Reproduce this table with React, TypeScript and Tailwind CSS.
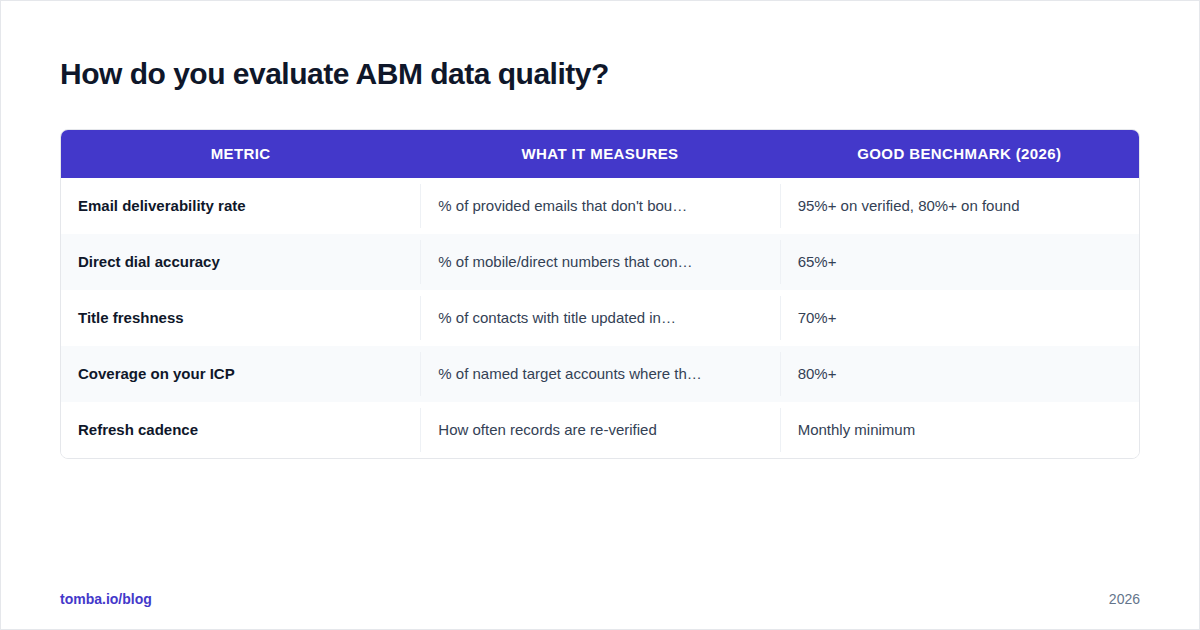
const ROWS = [
  { metric: 'Email deliverability rate', measures: "% of provided emails that don't bou…", benchmark: '95%+ on verified, 80%+ on found' },
  { metric: 'Direct dial accuracy', measures: '% of mobile/direct numbers that con…', benchmark: '65%+' },
  { metric: 'Title freshness', measures: '% of contacts with title updated in…', benchmark: '70%+' },
  { metric: 'Coverage on your ICP', measures: '% of named target accounts where th…', benchmark: '80%+' },
  { metric: 'Refresh cadence', measures: 'How often records are re-verified', benchmark: 'Monthly minimum' },
];

const HEADERS = ['Metric', 'What it measures', 'Good benchmark (2026)'];

export default function App() {
  return (
    <div
      className="w-[1200px] h-[630px] bg-white border border-gray-200 flex flex-col px-[59px] pt-[55px] pb-5"
      style={{ fontFamily: '"Liberation Sans", Arial, sans-serif' }}
    >
      <h1 className="text-[30px] leading-9 font-bold text-[#0f172a] tracking-[-0.5px]">
        How do you evaluate ABM data quality?
      </h1>

      <div className="mt-[37px] border border-gray-200 rounded-lg overflow-hidden">
        <div className="grid grid-cols-3 h-12 bg-[#4338ca]">
          {HEADERS.map((h) => (
            <div key={h} className="flex items-center justify-center pt-px text-[15px] font-bold uppercase tracking-[0.4px] text-white">
              {h}
            </div>
          ))}
        </div>

        {ROWS.map((row, i) => (
          <div
            key={row.metric}
            className={`grid grid-cols-3 h-14 py-1.5 ${i % 2 === 1 ? 'bg-[#f8fafc]' : 'bg-white'}`}
          >
            <div className="flex items-center pl-[17px] text-[15px] font-bold text-[#0f172a]">
              {row.metric}
            </div>
            <div className="flex items-center pl-[17px] border-l border-[#eef1f5] text-[15px] text-[#334155]">
              {row.measures}
            </div>
            <div className="flex items-center pl-[17px] border-l border-[#eef1f5] text-[15px] text-[#334155]">
              {row.benchmark}
            </div>
          </div>
        ))}
      </div>

      <div className="mt-auto flex items-center justify-between text-sm leading-5">
        <span className="font-bold text-[#4338ca]">tomba.io/blog</span>
        <span className="text-[#64748b]">2026</span>
      </div>
    </div>
  );
}
